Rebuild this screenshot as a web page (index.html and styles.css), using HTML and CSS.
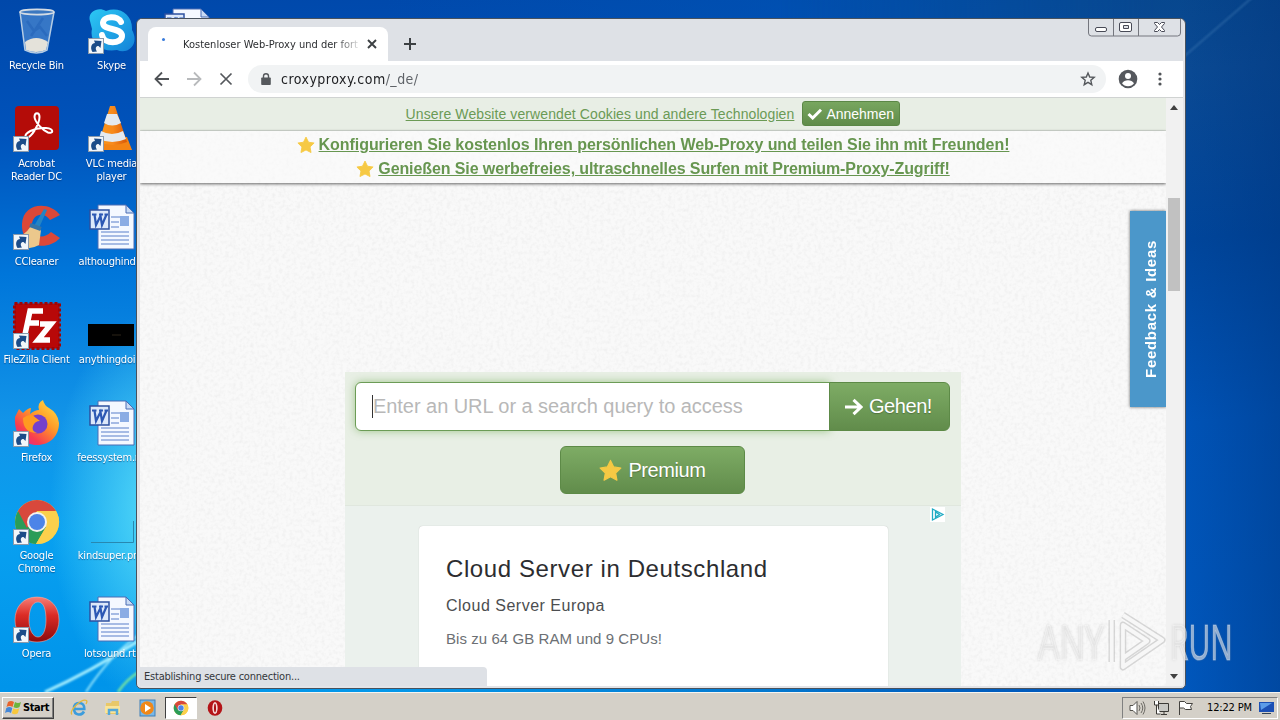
FILE: index.html
```
<!DOCTYPE html>
<html lang="de">
<head>
<meta charset="utf-8">
<title>Desktop</title>
<link rel="stylesheet" href="styles.css">
</head>
<body>
<svg class="defs" width="0" height="0">
  <defs>
    <linearGradient id="redO" x1="0" y1="0" x2="0" y2="1"><stop offset="0" stop-color="#f58078"/><stop offset=".4" stop-color="#dc2c26"/><stop offset="1" stop-color="#8c0a0c"/></linearGradient>
    <linearGradient id="ffx" x1="1" y1="0" x2=".2" y2="1"><stop offset="0" stop-color="#ffe84a"/><stop offset=".45" stop-color="#ff9a28"/><stop offset=".8" stop-color="#f83c50"/><stop offset="1" stop-color="#e02890"/></linearGradient>
    <linearGradient id="sky" x1="0" y1="0" x2="1" y2="1"><stop offset="0" stop-color="#2cc8f4"/><stop offset="1" stop-color="#1482d8"/></linearGradient>
    <linearGradient id="cone" x1="0" x2="1"><stop offset="0" stop-color="#f8981c"/><stop offset=".5" stop-color="#f88a1c"/><stop offset="1" stop-color="#d85808"/></linearGradient>
    <symbol id="shortcut" viewBox="0 0 16 16"><rect x=".5" y=".5" width="15" height="15" fill="#f2f6fa" stroke="#8a9aac"/><path d="M4.500 14C1.500 9 4 5 7 5L6 2.500l7.500.5L12.500 10 10.500 8C7.500 8 7 10.500 9 13.500z" fill="#1c4c88"/></symbol>
    <symbol id="word" viewBox="0 0 48 48"><path d="M10 1h28l8 8v36H10z" fill="#f4f8ff" stroke="#4a6cb4"/><path d="M38 1v8h8z" fill="#c8daf4" stroke="#4a6cb4"/><path d="M23 13h18M23 18h8M23 23h8M13 28h28M13 32h28M13 36h28M13 40h28" stroke="#8ca6dc" stroke-width="1.300"/><rect x="32" y="12" width="9" height="10" fill="#8aace4"/><rect x="2" y="6" width="19" height="19" fill="#dce8fa" stroke="#2c50a0" stroke-width="1.500"/><path d="M4 10.500h4.500M6.500 10.500L8 21l4.500-9 1.500 9 4.500-10.500M11 10.500h4M16.500 10.500h3.500" fill="none" stroke="#2c58b4" stroke-width="2.200"/></symbol>
    <symbol id="chrome" viewBox="0 0 48 48"><circle cx="24" cy="24" r="22" fill="#fbd04c"/><path d="M5 13A22 22 0 0 0 23 46L33 29 24 24z" fill="#2a9c58"/><path d="M24 13h19a22 22 0 0 1-20 33l10-17z" fill="#fbd04c"/><path d="M5 13a22 22 0 0 1 38 0H24L14 30z" fill="#d8483c"/><circle cx="24" cy="24" r="10" fill="#f2f2f0"/><circle cx="24" cy="24" r="8" fill="#4c84e8"/></symbol>
    <symbol id="opera" viewBox="0 0 48 48"><path fill-rule="evenodd" d="M24 1C10 1 2 11 2 24s8 22 22 22 22-9 22-22S38 1 24 1zm1 5c6 0 8 8 8 18s-3 17-8 17-9-7-9-17 3-18 9-18z" fill="url(#redO)" stroke="#f4b0a8" stroke-opacity=".7" stroke-width=".8"/></symbol>
    <symbol id="star" viewBox="0 0 20 20"><path d="M10 1.200l2.800 5.700 6.200.9-4.500 4.400 1.100 6.200L10 15.500l-5.600 2.900 1.100-6.200L1 7.800l6.200-.9z" fill="#f6c944" stroke="#f6c944" stroke-linejoin="round"/></symbol>
  </defs>
</svg>
<div class="desktop">
  <div class="shade"></div>
  <svg class="wallpaper" width="1280" height="720">
    <defs><filter id="soft"><feGaussianBlur stdDeviation="1.200"/></filter></defs>
    <g fill="none" filter="url(#soft)">
      <path d="M45 692Q90 672 140 640" stroke="#a8f0ff" stroke-width="3"/>
      <path d="M86 692Q110 655 140 634" stroke="#90e4fc" stroke-width="2"/>
      <path d="M118 692Q126 680 140 671" stroke="#78e4a0" stroke-width="2.500"/>
      <path d="M1180 60L1255 -5" stroke="#4a80b8" stroke-width="1.500" opacity=".6"/>
    </g>
  </svg>
  <div class="icons">
    <div class="item"><svg width="48" height="48" viewBox="0 0 48 48"><path d="M7 4l5 37q12 6 22 0L41 4z" fill="#6ca4e0" opacity=".5"/><path d="M12 34q11-8 23 0l-2 8q-10 4-20 0z" fill="#e4e2da"/><path d="M14 13l7 10 6-4 7 9M30 10L18 28" fill="none" stroke="#2464b8" stroke-width="2.500" opacity=".6"/><path d="M7 4l5 38q12 6 22 0L41 4" fill="none" stroke="#b4cce4" stroke-width="1.500"/><ellipse cx="24" cy="4" rx="17" ry="2.600" fill="#3c78c0" stroke="#d4dce4" stroke-width="1.700"/></svg><span>Recycle Bin</span></div>
    <div class="item"><svg width="48" height="48" viewBox="0 0 48 48"><rect x="2" y="0" width="44" height="44" rx="4" fill="#b40c08"/><path d="M13 31c-3-3 8-10 20-9 9 1 7 6 2 4.500C29 24 22 16 21.500 11c0-5 5-5 5 0C26.500 17 18 34 13 31z" fill="none" stroke="#fff" stroke-width="2"/><use href="#shortcut" x="0" y="30" width="16" height="16"/></svg><span>Acrobat<br>Reader DC</span></div>
    <div class="item"><svg width="48" height="48" viewBox="0 0 48 48"><path d="M47 11C37-3 10-2 9 20c-1 23 25 28 38 14l-9-6c-8 8-19 5-19-7 0-11 12-14 18-5z" fill="#dc4838"/><path d="M31 5l3 1-8 18-5-2z" fill="#2484c4"/><path d="M18 22l10 4-2 15q-7 4-13 3-8-2-13-10 11-1 18-12z" fill="#ecc88c"/><path d="M17 21l11 4" stroke="#3474a8" stroke-width="4"/><use href="#shortcut" x="0" y="30" width="16" height="16"/></svg><span>CCleaner</span></div>
    <div class="item"><svg width="48" height="48" viewBox="0 0 48 48"><rect x="1.500" y="1.500" width="45" height="45" fill="#b80808" stroke="#a00404" stroke-width="3" stroke-dasharray="3 2"/><path d="M30 9H17l-6 28M14 21h12M27 22h11L25 38h12" fill="none" stroke="#fff" stroke-width="5.500"/><use href="#shortcut" x="0" y="31" width="16" height="16"/></svg><span>FileZilla Client</span></div>
    <div class="item"><svg width="48" height="48" viewBox="0 0 48 48"><path d="M2 17l4-8 4 4q5-5 8-5l-1 6q5-4 9-4-2-7 4-10 1 5 6 8 9 5 10 15c0 13-9 22-22 22S1 36 2 17z" fill="url(#ffx)"/><circle cx="25" cy="24" r="9.500" fill="#7440cc"/><path d="M10 18q8-6 13 0l4 3q-5 0-7 5-2 5 4 7-14 0-14-15z" fill="#ff9a20"/><use href="#shortcut" x="0" y="31" width="16" height="16"/></svg><span>Firefox</span></div>
    <div class="item"><svg width="48" height="48"><use href="#chrome"/><use href="#shortcut" x="0" y="31" width="16" height="16"/></svg><span>Google<br>Chrome</span></div>
    <div class="item"><svg width="48" height="48"><use href="#opera"/><use href="#shortcut" x="0" y="31" width="16" height="16"/></svg><span>Opera</span></div>
    <div class="item"><svg width="48" height="48" viewBox="0 0 48 48"><path d="M2 13C-1 4 10-2 18 3c14-5 27 4 26 19 8 14-4 25-15 20C13 45 1 34 4 21z" fill="url(#sky)"/><path d="M33 14c-3-7-18-6-18 1 0 8 19 4 19 13 0 8-18 9-20-1" fill="none" stroke="#fff" stroke-width="6" stroke-linecap="round"/><use href="#shortcut" x="0" y="30" width="16" height="16"/></svg><span>Skype</span></div>
    <div class="item"><svg width="48" height="48" viewBox="0 0 48 48"><path d="M10 31L3 44l41 0-5-13z" fill="#f48414"/><path d="M22 0h5l12 36q-14 6-28 0z" fill="url(#cone)"/><path d="M19 8h10l4 9q-9 5-17 0zM13 25q11 6 22 0l3 8q-14 6-27 0z" fill="#e4eaf0"/><use href="#shortcut" x="0" y="30" width="16" height="16"/></svg><span>VLC media<br>player</span></div>
    <div class="item"><svg width="48" height="48"><use href="#word"/></svg><span>althoughind...</span></div>
    <div class="item"><svg width="48" height="48"><rect x="0" y="22" width="46" height="22"/><path d="M24 33h9" stroke="#2c2418"/></svg><span>anythingdoi...</span></div>
    <div class="item"><svg width="48" height="48"><use href="#word"/></svg><span>feessystem.rtf</span></div>
    <div class="item"><svg width="48" height="48"><path d="M3 44.500h42.500V23" fill="none" stroke="#2888b0"/></svg><span>kindsuper.png</span></div>
    <div class="item"><svg width="48" height="48"><use href="#word"/></svg><span>lotsound.rtf</span></div>
    <div class="item"><svg width="48" height="48"><use href="#word"/></svg></div>
  </div>

  <div class="window">
    <div class="tabstrip">
      <div class="tab"><i class="spin"></i><span class="title">Kostenloser Web-Proxy und der fort</span><svg width="10" height="10" viewBox="0 0 10 10"><path d="M1 1l8 8M9 1L1 9" stroke="#3c4043" stroke-width="1.900"/></svg></div>
      <svg class="plus" width="12" height="12" viewBox="0 0 12 12"><path d="M6 0v12M0 6h12" stroke="#3c4043" stroke-width="2"/></svg>
      <svg class="caption" width="93" height="18" viewBox="0 0 93 18"><path d="M.5 0v14q0 3 3 3h86q3 0 3-3V0M25.500 0v17M50.500 0v17" fill="none" stroke="#74767e"/><g fill="#fff" stroke="#484a56"><rect x="7.500" y="8.500" width="11" height="4" rx="1.500"/><path fill-rule="evenodd" d="M33 3.500h9q1.500 0 1.500 1.500v6q0 1.500-1.500 1.500h-9q-1.500 0-1.500-1.500V5q0-1.500 1.500-1.500zM35.500 6.500v3h5v-3z"/><path d="M66.500 3.500h3l2 2 2-2h3v1L73.500 8l3 3.500v1h-3l-2-2-2 2h-3v-1l3-3.500-3-3.500z"/></g></svg>
    </div>
    <div class="toolbar">
      <svg width="16" height="16" viewBox="0 0 16 16"><path d="M15 8H2M8 1.500L1.500 8 8 14.500" fill="none" stroke="#505357" stroke-width="1.800"/></svg>
      <svg width="16" height="16" viewBox="0 0 16 16"><path d="M1 8h13M8 1.500L14.500 8 8 14.500" fill="none" stroke="#b8babc" stroke-width="1.800"/></svg>
      <svg width="16" height="16" viewBox="0 0 16 16"><path d="M2.500 2.500l11 11M13.500 2.500l-11 11" stroke="#55585c" stroke-width="1.700"/></svg>
      <div class="omnibox">
        <svg width="10" height="12" viewBox="0 0 10 12"><path d="M1 4.500h8q.8 0 .8.800V11q0 1-.8 1H1q-.8 0-.8-1V5.300q0-.8.8-.8z" fill="#55585c"/><path d="M2.500 5V3q0-2.300 2.500-2.300T7.500 3v2" fill="none" stroke="#55585c" stroke-width="1.400"/></svg>
        <span class="url">croxyproxy.com<em>/_de/</em></span>
        <svg width="16" height="16" viewBox="0 0 16 16"><path d="M8 2l1.700 4 4.500.4-3.400 2.900 1 4.400L8 11.400l-3.800 2.300 1-4.400L1.800 6.400 6.300 6z" fill="none" stroke="#55585c" stroke-width="1.400"/></svg>
      </div>
      <svg class="user" width="20" height="20" viewBox="0 0 20 20"><circle cx="10" cy="10" r="9.300" fill="#55585d"/><circle cx="10" cy="7" r="3" fill="#fff"/><path d="M4 14.200q2-3 6-3t6 3q-2 3-6 3t-6-3z" fill="#fff"/></svg>
      <svg class="dots" width="4" height="14" viewBox="0 0 4 14"><circle cx="2" cy="2" r="1.600" fill="#505357"/><circle cx="2" cy="7" r="1.600" fill="#505357"/><circle cx="2" cy="12" r="1.600" fill="#505357"/></svg>
    </div>
    <div class="view">
      <div class="page">
        <svg class="grain" width="1026" height="588"><filter id="noise" x="0" y="0" width="100%" height="100%"><feTurbulence type="fractalNoise" baseFrequency=".28" numOctaves="2" seed="4"/><feColorMatrix values="0 0 0 0 .45  0 0 0 0 .45  0 0 0 0 .45  1.200 0 0 0 -.5"/></filter><rect width="1026" height="588" filter="url(#noise)" opacity=".22"/></svg>
        <div class="cookie"><a>Unsere Website verwendet Cookies und andere Technologien</a><button class="accept"><svg width="16" height="12" viewBox="0 0 16 12"><path d="M1.500 6l4.200 4L14 1.800" fill="none" stroke="#fff" stroke-width="3"/></svg><span>Annehmen</span></button></div>
        <div class="promo">
          <div><svg width="18" height="18"><use href="#star"/></svg><a class="p1">Konfigurieren Sie kostenlos Ihren persönlichen Web-Proxy und teilen Sie ihn mit Freunden!</a></div>
          <div><svg width="18" height="18"><use href="#star"/></svg><a class="p2">Genießen Sie werbefreies, ultraschnelles Surfen mit Premium-Proxy-Zugriff!</a></div>
        </div>
        <div class="panel">
          <div class="search"><div class="field"><i></i><span>Enter an URL or a search query to access</span></div><button class="go"><svg width="18" height="18" viewBox="0 0 18 18"><path d="M0 9h15M8.500 1.800L16 9l-7.500 7.200" fill="none" stroke="#fff" stroke-width="3"/></svg><span>Gehen!</span></button></div>
          <button class="premium"><svg width="23" height="23"><use href="#star"/></svg><span>Premium</span></button>
          <div class="ad">
            <svg class="choice" width="15" height="15" viewBox="0 0 15 15"><path fill="#fff" d="M0 0h15v15H0z"/><path d="M2.500 2v11l10.500-5.500zM5.500 5v5l4-2.500z" fill="none" stroke="#20acc4" stroke-width="1.300"/></svg>
            <div class="card"><h2>Cloud Server in Deutschland</h2><h3>Cloud Server Europa</h3><p>Bis zu 64 GB RAM und 9 CPUs!</p></div>
          </div>
        </div>
        <div class="feedback"><span>Feedback &amp; Ideas</span></div>
        <div class="status">Establishing secure connection...</div>
      </div>
      <div class="scroll"><svg width="8" height="5"><path d="M0 5L4 0l4 5z" fill="#404040"/></svg><div class="thumb"></div><svg class="down" width="8" height="5"><path d="M0 0l4 5 4-5z" fill="#404040"/></svg></div>
    </div>
  </div>

  <div class="mark">
    <span class="any">ANY</span>
    <svg width="58" height="62" viewBox="0 0 62 62" preserveAspectRatio="none"><g fill="none" stroke="#888" stroke-opacity=".3" stroke-width="7" stroke-linejoin="round"><path d="M4 10v42M16 5l42 25-42 27V15l26 16-26 17"/></g><g fill="none" stroke="#fff" stroke-opacity=".8" stroke-width="4" stroke-linejoin="round"><path d="M4 10v42M16 5l42 25-42 27V15l26 16-26 17"/></g></svg>
    <span class="run">RUN</span>
  </div>

  <div class="taskbar">
    <div class="start"><svg width="17" height="15" viewBox="0 0 17 15"><path d="M3 2q3-2 6 0L7.500 7q-3-2-6 0z" fill="#e8642c"/><path d="M10 2q3 2 6 0l-1.500 5q-3 2-6 0z" fill="#6cb43c"/><path d="M1.300 8q3-2 6 0L6 13q-3-2-6 0z" fill="#4488d8"/><path d="M8.300 8.300q3 2 6 0l-1.500 5q-3 2-6 0z" fill="#f8c83c"/></svg><b>Start</b></div>
    <div class="quick">
      <div class="q"><svg width="18" height="18" viewBox="0 0 18 18"><path d="M14 12.500Q12 16 8.500 15.500 4 15 4 9.500T9 4q5.500 0 5.300 6H5" fill="none" stroke="#3c9cdc" stroke-width="2.600"/><path d="M2 15.500C-2 12 12-1 16.500 1.500q1 1-.5 3.500" fill="none" stroke="#e4b83c" stroke-width="1.300"/></svg></div>
      <div class="q"><svg width="18" height="18" viewBox="0 0 18 18"><path d="M2 4h5l1-2h7v13H2z" fill="#e8c868"/><path d="M1 7h15v7H1z" fill="#fae498"/><path d="M5 16v-5h8v5" fill="none" stroke="#54a8d8" stroke-width="2.500"/></svg></div>
      <div class="q"><svg width="18" height="18" viewBox="0 0 18 18"><rect x="2" y="1" width="15" height="16" fill="#78b8e8" stroke="#4080b8"/><circle cx="9" cy="9" r="6.800" fill="#f08818"/><path d="M7 5v8l6-4z" fill="#fff"/></svg></div>
      <div class="q active"><svg width="16" height="16" viewBox="0 0 48 48"><use href="#chrome"/></svg></div>
      <div class="q"><svg width="16" height="16" viewBox="0 0 48 48"><ellipse cx="24" cy="24" rx="22" ry="23" fill="#b41418"/><ellipse cx="24" cy="24" rx="8" ry="18" fill="#f8d8d8"/><ellipse cx="24" cy="24" rx="3" ry="13" fill="#a80c10"/></svg></div>
    </div>
    <div class="tray">
      <svg width="17" height="16" viewBox="0 0 17 16"><path d="M1 5.500h3L8 1.500v13l-4-4H1z" fill="#fff" stroke="#55534e"/><path d="M10 5q2 3 0 6M12 3q3.500 5 0 10M14 1.500q4 6.500 0 13" fill="none" stroke="#6c6a64"/></svg>
      <svg width="17" height="16" viewBox="0 0 17 16"><path d="M5.500 3.500h10v8h-10zM8 14.500h6M11 12v2" fill="#c8c8c4" stroke="#3c3a36"/><path d="M1.500 1v4h4V1M3.500 5v9h4" fill="#fff" stroke="#3c3a36"/></svg>
      <svg width="17" height="16" viewBox="0 0 17 16"><path d="M2.500 15V1.500h5l2 2h6l-2 3 1 3h-6l-2-1.500h-4" fill="#fff" stroke="#44423e"/></svg>
      <span>12:22 PM</span>
      <svg width="15" height="13" viewBox="0 0 15 13"><path d="M0 1h15v10H0z" fill="#1c50b4"/><path d="M1 2h12L2 9z" fill="#5c9ce8"/><path d="M3 12.500h9" stroke="#345"/></svg>
    </div>
  </div>
</div>
</body>
</html>
```

FILE: styles.css
```
* { box-sizing: border-box; }
body { margin: 0; overflow: hidden; }
svg { display: block; flex: none; }
button { border: 0; padding: 0; margin: 0; font: inherit; color: #fff; }
.defs { position: absolute; }
.desktop {
  position: relative; width: 1280px; height: 720px; overflow: hidden;
  font-family: "DejaVu Sans Condensed", "DejaVu Sans", sans-serif; font-stretch: condensed;
  background:
    radial-gradient(110px 200px at 160px 510px, #58dcf8, rgba(60,200,248,0)),
    linear-gradient(90deg, rgba(0,80,180,0) 30%, #0054b4 92%),
    linear-gradient(178deg, #0048aa 0%, #0052ba 17%, #0076da 36%, #1294e8 55%, #08a0f0 70%, #0094ea 90%, #10a4ea 100%);
}
.shade {
  position: absolute; right: 0; top: 0; width: 500px; height: 720px;
  background:
    linear-gradient(90deg, rgba(0,50,120,0) 80%, rgba(0,50,120,.4)),
    linear-gradient(175deg, #06468c 0%, #0a4a94 14%, #00469c 36%, #0054b8 60%, #0058be 100%);
  -webkit-mask-image: linear-gradient(90deg, transparent, #000 75%);
  mask-image: linear-gradient(90deg, transparent, #000 75%);
}
.wallpaper { position: absolute; inset: 0; }
.icons { position: relative; display: grid; grid-auto-flow: column; grid-template-rows: repeat(7, 98px); grid-auto-columns: 75px; width: 225px; padding-top: 8px; margin-left: -1px; }
.item { display: flex; flex-direction: column; align-items: center; gap: 3px; color: #fff; font-size: 11px; line-height: 13px; text-align: center; text-shadow: 0 1px 1px rgba(0,30,80,.5); white-space: nowrap; letter-spacing: -.2px; }

.window { position: absolute; left: 136px; top: 18px; width: 1050px; height: 671px; display: flex; flex-direction: column; padding: 0 2px 2px 3px; border: 1px solid #48525e; border-radius: 6px 6px 5px 5px; background: #e3e4e8; overflow: hidden; }
.tabstrip { display: flex; height: 42px; background: #dee1e6; padding-left: 8px; flex: none; }
.tab { display: flex; align-items: center; width: 240px; height: 34px; margin-top: 8px; padding-left: 14px; background: #fff; border-radius: 8px 8px 0 0; }
.spin { width: 3px; height: 3px; border-radius: 50%; background: #3a7cdc; margin-top: -9px; }
.title { width: 176px; margin-left: 18px; margin-right: 8px; font-size: 11px; color: #2c2e31; white-space: nowrap; overflow: hidden; -webkit-mask-image: linear-gradient(90deg, #000 86%, rgba(0,0,0,.15)); mask-image: linear-gradient(90deg, #000 86%, rgba(0,0,0,.15)); }
.plus { margin: 19px 0 0 16px; }
.caption { margin-left: auto; margin-right: 2px; }
.toolbar { display: flex; align-items: center; height: 37px; flex: none; background: #fff; padding: 0 21px 1px 14px; border-bottom: 1px solid #d0d3d2; }
.toolbar > svg { margin-right: 16px; }
.omnibox { display: flex; align-items: center; height: 28px; flex: 1; margin: 0 12px 0 -2px; padding: 0 10px 0 13px; border-radius: 14px; background: #f1f3f4; }
.url { flex: 1; margin-left: 10px; font-size: 14px; letter-spacing: .48px; color: #202124; font-family: "DejaVu Sans Condensed", "DejaVu Sans", sans-serif; }
.url em { font-style: normal; color: #5f6368; }
.toolbar > .user { margin-right: 20px; }
.toolbar > .dots { margin: 0; }
.view { display: flex; flex: 1; min-height: 0; }
.page { position: relative; width: 1026px; flex: none; display: flex; flex-direction: column; align-items: center; background: #f9f9f9; overflow: hidden; font-family: "Liberation Sans", Arial, sans-serif; }
.grain { position: absolute; inset: 0; }
.cookie { position: relative; width: 100%; height: 33px; flex: none; display: flex; align-items: center; justify-content: center; gap: 8px; padding-bottom: 1px; background: #e8eee5; border-bottom: 1px solid #d9dfd7; font-size: 14px; color: #6b9a55; }
.cookie a { text-decoration: underline; letter-spacing: .1px; white-space: nowrap; }
.accept { display: flex; align-items: center; gap: 3px; height: 25px; width: 98px; padding-left: 4px; border: 1px solid #5b8746; border-radius: 3px; background: linear-gradient(#78a65f, #608c4a); font-size: 14px; }
.promo { position: relative; width: 100%; height: 52px; flex: none; padding-top: 2px; box-shadow: 0 1px 3px rgba(0,0,0,.6); background: rgba(252,252,252,.55); }
.promo div { display: flex; align-items: center; justify-content: center; gap: 4px; height: 24px; font-size: 16px; font-weight: bold; color: #679650; white-space: nowrap; }
.promo a { text-decoration: underline; }
.p1 { letter-spacing: -.056px; }
.p2 { letter-spacing: -.1px; }
.panel { position: relative; width: 616px; height: 400px; flex: none; margin-top: 189px; padding-top: 10px; background: #e8efe5; display: flex; flex-direction: column; align-items: center; }
.search { display: flex; width: 595px; height: 49px; flex: none; margin-right: 1px; font-size: 20px; }
.field { display: flex; align-items: center; width: 475px; background: #fff; border: 1px solid #6c9c56; border-radius: 6px 0 0 6px; padding-left: 16px; color: #b8b8b8; box-shadow: 0 0 8px rgba(110,170,80,.6); white-space: nowrap; letter-spacing: -.05px; }
.field i { width: 1px; height: 23px; background: #333; }
.go { display: flex; align-items: center; gap: 6px; width: 121px; margin-left: -1px; padding-left: 15px; border: 1px solid #5d8a47; border-radius: 0 6px 6px 0; background: linear-gradient(#7eac65, #618c4b); position: relative; font-size: 20px; letter-spacing: -.45px; text-shadow: 0 1px 1px rgba(0,0,0,.25); }
.premium { display: flex; align-items: center; justify-content: center; gap: 6px; width: 185px; height: 48px; flex: none; margin: 15px 1px 0 0; border: 1px solid #5d8a47; border-radius: 6px; background: linear-gradient(#7eac65, #618c4b); font-size: 20px; letter-spacing: -.4px; text-shadow: 0 1px 1px rgba(0,0,0,.25); }
.ad { width: 616px; flex: 1; margin-top: 11px; background: #ebf1ed; border-top: 1px solid #e0e7de; }
.choice { margin: 1px 0 0 585px; }
.card { width: 469px; height: 300px; margin: 4px 0 0 74px; padding: 28px 27px; background: #fff; border-radius: 4px; box-shadow: 0 0 1px rgba(0,0,0,.25); white-space: nowrap; }
.card h2 { margin: 0; font-size: 24px; line-height: 30px; font-weight: normal; color: #2c2d30; letter-spacing: .6px; }
.card h3 { margin: 12px 0 0; font-size: 16px; line-height: 20px; font-weight: normal; color: #4c4e50; letter-spacing: .5px; }
.card p { margin: 14px 0 0; font-size: 15px; line-height: 18px; color: #6c7074; letter-spacing: .06px; }
.feedback { position: absolute; right: 0; top: 113px; width: 36px; height: 196px; display: flex; align-items: center; justify-content: center; padding-left: 4px; background: #4b97ca; box-shadow: 0 0 3px rgba(0,0,0,.6); color: #fff; font-size: 15px; font-weight: bold; }
.feedback span { writing-mode: vertical-rl; transform: rotate(180deg); white-space: nowrap; letter-spacing: .7px; }
.status { position: absolute; left: 0; bottom: 0; width: 347px; height: 19px; padding-left: 4px; background: #dee1e6; border-top-right-radius: 4px; font: 11px/20px "DejaVu Sans Condensed", "DejaVu Sans", sans-serif; letter-spacing: -.22px; color: #34373b; }
.scroll { width: 17px; background: #f1f1f1; display: flex; flex-direction: column; align-items: center; padding: 7px 1px 7px 0; }
.thumb { width: 12px; height: 93px; margin-top: 88px; background: #c1c1c1; }
.down { margin-top: auto; }

.mark { position: absolute; left: 1038px; top: 610px; display: flex; align-items: center; color: rgba(255,255,255,.5); font: 49px/62px "Open Sans", "Liberation Sans", sans-serif; -webkit-text-stroke: 1px rgba(255,255,255,.35); text-shadow: 0 0 3px rgba(120,120,120,.4); }
.mark span { display: block; width: 64px; white-space: nowrap; transform-origin: 0 50%; }
.mark svg { margin: 0 0 0 6px; }
.any { transform: scaleX(.69); }
.mark .run { transform: scaleX(.61); margin-left: 4px; }

.taskbar { position: absolute; left: 0; top: 692px; width: 1280px; height: 28px; display: flex; align-items: center; padding: 2px 2px 0; background: #d4d0c8; border-top: 1px solid #f6f4f0; }
.start { display: flex; align-items: center; gap: 1px; width: 52px; height: 22px; padding-left: 2px; border: 1px solid; border-color: #fff #404040 #404040 #fff; box-shadow: inset -1px -1px #808080; font-size: 11px; letter-spacing: -.4px; }
.quick { display: flex; margin-left: 9px; gap: 2px; }
.q { width: 32px; height: 22px; display: flex; align-items: center; justify-content: center; }
.q.active { background: #fff; border: 1px solid; border-color: #404040 #fff #fff #404040; }
.tray { display: flex; align-items: center; gap: 7px; width: 156px; height: 22px; margin-left: auto; padding-left: 6px; border: 1px solid; border-color: #808080 #fff #fff #808080; font-size: 11px; }
.tray span { margin-left: 6px; white-space: nowrap; letter-spacing: -.15px; }
```
